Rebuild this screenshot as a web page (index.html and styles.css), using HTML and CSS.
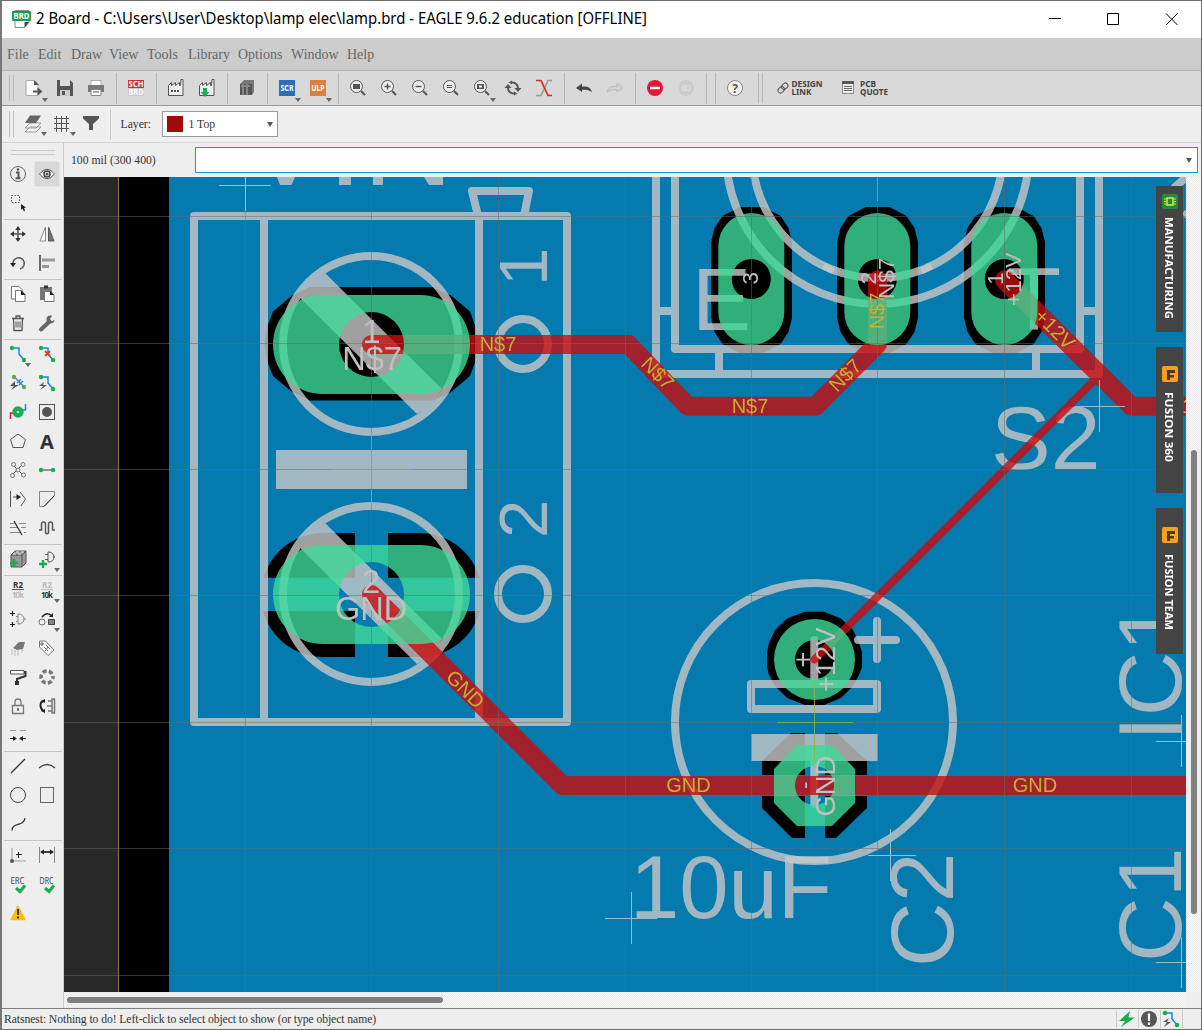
FILE: index.html
```
<!DOCTYPE html>
<html lang="en">
<head>
<meta charset="utf-8">
<title>2 Board - EAGLE</title>
<link rel="stylesheet" href="styles.css">
</head>
<body>
<div class="window">
  <header class="titlebar">
    <svg class="app-icon" viewBox="0 0 20 22"><path d="M3 2.500h14v12l-4.500 5H3z" fill="#fff" stroke="#888"/><path d="M17 14h-4.500v5.500z" fill="#444"/><rect y="3" width="19" height="10" rx="1" fill="#1c9a4e"/><text x="9.500" y="11.300" class="ic-b" font-size="8.500" fill="#fff" textLength="16" lengthAdjust="spacingAndGlyphs">BRD</text></svg>
    <svg class="title-text" width="620" height="30" viewBox="0 0 620 30"><text x="1" y="20" textLength="611" lengthAdjust="spacingAndGlyphs">2 Board - C:\Users\User\Desktop\lamp elec\lamp.brd - EAGLE 9.6.2 education [OFFLINE]</text></svg>
    <svg class="win-buttons" width="136" height="30" viewBox="0 0 136 30" fill="none" stroke="#000"><path d="M0 14.500h12M58.500 9.500h11v11h-11zM117 9.500l11.500 11.500M128.500 9.500l-11.500 11.500"/></svg>
  </header>
  <nav class="menubar"><span>File</span><span>Edit</span><span>Draw</span><span>View</span><span>Tools</span><span>Library</span><span>Options</span><span>Window</span><span>Help</span></nav>

  <div class="toolbar">
    <i class="grip"></i>
    <svg class="tb"><path d="M-8-7.500H0l4 4V7.500H-8z" fill="#fff" stroke="#aaa"/><path d="M0-8l5 5H0z" class="f"/><path d="M-1 3.500H6M3.500 0.500l3.500 3-3.500 3" class="s w2"/><path d="M8 10h6l-3 4z" class="a"/></svg>
    <svg class="tb"><path d="M-8-8H5l3 3V8H-8z" class="f"/><path d="M-5-8H5v6H-5z" fill="#ddd"/><path d="M-5 2H5v6H-5z" fill="#ccc"/><path d="M-3 3h3v4h-3z" class="f"/></svg>
    <svg class="tb"><path d="M-5-7.500H5v5H-5z" fill="#fff" stroke="#aaa"/><path d="M-8-3H8V4H-8z" fill="#777"/><path d="M-5 1.500H5v6H-5z" fill="#fff" stroke="#888"/><path d="M-3 4H3" class="s"/></svg>
    <i class="sep"></i>
    <svg class="tb"><rect x="-8" y="-8" width="16" height="8" fill="#cf2b2b"/><rect x="-8" width="16" height="8" fill="#c9c9c9"/><text y="-1" class="ic-b" font-size="8" fill="#fff" textLength="15" lengthAdjust="spacingAndGlyphs">SCH</text><text y="7" class="ic-b" font-size="8" fill="#fff" textLength="15" lengthAdjust="spacingAndGlyphs">BRD</text></svg>
    <i class="sep"></i>
    <svg class="tb"><path d="M-7.500 7.500v-10l3-3v3l4-3v3l4-3v3h1l.5-6h2V7.500z" fill="#eee" stroke="#555"/><path d="M-5 3h9" stroke="#555" stroke-width="2" stroke-dasharray="2 1"/></svg>
    <svg class="tb"><path d="M-7.500 7.500v-10l3-3v3l4-3v3l4-3v3h1l.5-6h2V7.500z" fill="#eee" stroke="#555"/><path d="M-4 0h4v4h2.500l-4.500 5-4.500-5H-4z" fill="#1ab04c"/></svg>
    <i class="sep"></i>
    <svg class="tb"><path d="M-7-4l4-4H7l-2 4zM7-8V4L5 7V-4z" fill="#777"/><path d="M-7-4H5V7H-7z" fill="#555"/><path d="M-4-4v11M0-4v11M-6-2h1M-3-2h2M1-2h2" stroke="#bbb"/></svg>
    <i class="sep"></i>
    <svg class="tb"><rect x="-8" y="-8" width="16" height="16" fill="#2a70b8"/><text y="3" class="ic-b" font-size="8.500" fill="#fff" textLength="13" lengthAdjust="spacingAndGlyphs">SCR</text><path d="M8 10h6l-3 4z" class="a"/></svg>
    <svg class="tb"><rect x="-8" y="-8" width="16" height="16" fill="#db813c"/><text y="3" class="ic-b" font-size="8.500" fill="#fff" textLength="13" lengthAdjust="spacingAndGlyphs">ULP</text><path d="M8 10h6l-3 4z" class="a"/></svg>
    <i class="sep"></i>
    <svg class="tb"><circle cx="-1.500" cy="-1.500" r="6" class="s"/><path d="M3 3l4 4" class="s w2"/><path d="M-5-4h7v5h-7z" class="f"/></svg>
    <svg class="tb"><circle cx="-1.500" cy="-1.500" r="6" class="s"/><path d="M3 3l4 4" class="s w2"/><path d="M-4.500-1.500h6M-1.500-4.500v6" class="s w15"/></svg>
    <svg class="tb"><circle cx="-1.500" cy="-1.500" r="6" class="s"/><path d="M3 3l4 4" class="s w2"/><path d="M-4.500-1.500h6" class="s w15"/></svg>
    <svg class="tb"><circle cx="-1.500" cy="-1.500" r="6" class="s"/><path d="M3 3l4 4" class="s w2"/><path d="M-4-2.500h5M-4-.5h5" class="s"/></svg>
    <svg class="tb"><circle cx="-1.500" cy="-1.500" r="6" class="s"/><path d="M3 3l4 4" class="s w2"/><path d="M-5-4h7v5h-7z" class="f"/><path d="M-3-2.500h3v2h-3z" fill="#fff"/><path d="M8 10h6l-3 4z" class="a"/></svg>
    <svg class="tb"><path d="M-1-5.500A5.500 5.500 0 0 1 5 0M1 5.500A5.500 5.500 0 0 1-5 0" class="s w2"/><path d="M1.500 0h7L5 4zM-1.500 0h-7L-5-4zM-1-7.500v4l-3.500-2zM1 7.500v-4l3.500 2z" class="f"/></svg>
    <svg class="tb"><path d="M8-7.500H4L-3 7.500h-5" fill="none" stroke="#999" stroke-width="1.500"/><path d="M-8-7.500h5L4 7.500h4" fill="none" stroke="#d8261e" stroke-width="1.700"/></svg>
    <i class="sep"></i>
    <svg class="tb"><path d="M-8 0l6-4.500v3C4-2 7 0 8 4 5 2 2 1.500-2 1.800V4z" fill="#444"/></svg>
    <svg class="tb"><path d="M8 0L2-4.500v3C-4-2-7 0-8 4c3-2 6-2.500 10-2.200V4z" fill="#d4d4d4" stroke="#bbb"/></svg>
    <i class="sep"></i>
    <svg class="tb"><circle r="8" fill="#de1a38"/><path d="M-5 0H5" stroke="#fff" stroke-width="2.500"/></svg>
    <svg class="tb"><circle r="8" fill="#cdcdcd"/><text y="3" class="ic-b" font-size="8" fill="#ddd" textLength="10">GO</text></svg>
    <i class="sep"></i><i class="sep"></i>
    <svg class="tb"><circle r="7.500" fill="#f2f2f2" stroke="#888"/><text y="4.500" class="ic-b" font-size="12" fill="#555">?</text></svg>
    <i class="grip2"></i>
    <svg class="wide" width="50" height="20" viewBox="0 0 50 20"><g class="s" transform="rotate(-45 6 10)"><rect x="0" y="7.500" width="7" height="5" rx="2.500"/><rect x="5" y="7.500" width="7" height="5" rx="2.500"/></g><text x="14.500" y="9" textLength="31" lengthAdjust="spacingAndGlyphs">DESIGN</text><text x="14.500" y="16.500" textLength="20" lengthAdjust="spacingAndGlyphs">LINK</text></svg>
    <svg class="wide" width="50" height="20" viewBox="0 0 50 20"><path d="M.5 3.500h11v12H.5z" fill="#eee" stroke="#888"/><path d="M0 3h12v3H0z" class="f"/><path d="M2 8.500h8M2 10.500h8M2 12.500h8" stroke="#666"/><text x="18" y="9" textLength="16" lengthAdjust="spacingAndGlyphs">PCB</text><text x="18" y="16.500" textLength="28" lengthAdjust="spacingAndGlyphs">QUOTE</text></svg>
  </div>

  <div class="toolbar params">
    <i class="grip"></i>
    <svg class="pb"><path d="M-8 6l5-5H8L3 6zM-8 2l5-5H8L3 2z" transform="translate(0 2)" fill="#f6f6f6" stroke="#999"/><path d="M-8-1l5-7.500H8L3-1z" fill="#666"/><path d="M8 8h6l-3 4z" class="a"/></svg>
    <svg class="pb"><path d="M-8-5.500H7M-8-.5H7M-8 4.500H7M-5.500-8V8M-.5-8V8M4.500-8V8" class="s"/><path d="M8 8h6l-3 4z" class="a"/></svg>
    <svg class="pb"><path d="M-8-8H8v2.500L2 0v6h-4V0l-6-5.500z" class="f"/></svg>
    <i class="psep"></i>
    <span class="layer-label">Layer:</span>
    <div class="combo"><b></b><span>1 Top</span><em></em></div>
  </div>

  <main class="workspace">
    <aside class="tools">
      <svg class="t"><circle r="7.500" fill="none" stroke="#666"/><path d="M-2-1.500H.5V4M-2.500 4.200h5" class="s w2"/><circle cx="0" cy="-4.500" r="1.300" class="f"/></svg>
      <svg class="t"><rect x="-12.500" y="-12.500" width="25" height="25" rx="1.500" fill="#d8d8d8"/><path d="M-7.500 0Q0-9.500 7.500 0Q0 9.500-7.500 0z" fill="#fff" stroke="#555"/><circle r="3" fill="#eee" stroke="#444" stroke-width="1.500"/><circle r="1.500" class="f"/></svg>
      <svg class="t"><path d="M-6.500-7.500h8v7h-8z" fill="none" stroke="#555" stroke-dasharray="1.500 1.500"/><path d="M3 1v6l1.500-1.500L6 8.500l1-1L6 5l2-.5z" fill="#222"/></svg>
      <span></span>
      <hr>
      <svg class="t"><path d="M-5 0H5M0-5V5" class="s w15"/><path d="M-8 0l4-2.700v5.400zM8 0L4-2.700v5.400zM0-8l-2.700 4h5.400zM0 8l-2.700-4h5.400z" fill="#333"/></svg>
      <svg class="t"><path d="M-1.500-7V7h-5.500z" fill="#fff" stroke="#888"/><path d="M1.500-7V7H7z" fill="#777" stroke="#555"/></svg>
      <svg class="t"><path d="M-5 1.500A5.700 5.700 0 1 1 2 6" class="s w15"/><path d="M-8 0h6l-3 4z" fill="#222"/></svg>
      <svg class="t"><path d="M-7-8V8" stroke="#222" stroke-width="1.300"/><path d="M-5-4.500H8v3H-5zM-5 2H2v3h-7z" fill="#999"/></svg>
      <hr>
      <svg class="t"><path d="M-6.500-7.500H1l3 3V5h-10.500z" fill="#fff" stroke="#777"/><path d="M-2.500-3.500H3l4 4v7h-9.500z" fill="#fff" stroke="#777"/><path d="M3-4l4.500 5H3z" fill="#222"/></svg>
      <svg class="t"><path d="M-7-7H5V6H-7z" fill="#777"/><path d="M-3-8.500h4v3h-4z" fill="#333"/><path d="M-2.500-2.500H3l4 4v6h-9.500z" fill="#fff" stroke="#777"/><path d="M3-3l4.500 4H3z" fill="#222"/></svg>
      <svg class="t"><path d="M-6-4.500H6M-4.500-4.500l.5 12h8l.5-12M-2-5v-2h4v2" fill="none" stroke="#555" stroke-width="1.300"/><path d="M-2-1.500v6M0-1.500v6M2-1.500v6" class="s"/></svg>
      <svg class="t"><path d="M-6 6.500L2-1" stroke="#666" stroke-width="4" stroke-linecap="round"/><circle cx="3.500" cy="-3.500" r="4" fill="#666"/><path d="M3-4l3-4.500 3 4-4 3z" fill="#eee"/></svg>
      <hr>
      <svg class="t"><path d="M-6-6H1V0L6 6" class="bl"/><g class="g"><circle cx="-6" cy="-6" r="2.200"/><circle cx="6" cy="6" r="2.200"/></g><path d="M7 9h6l-3 4z" class="a"/></svg>
      <svg class="t"><path d="M-6-6H1V0L6 6" class="bl"/><g class="g"><circle cx="-6" cy="-6" r="2.200"/><circle cx="6" cy="6" r="2.200"/></g><path d="M-2-3l5 5M3-3l-5 5" stroke="#e33" stroke-width="1.800"/></svg>
      <svg class="t"><path d="M-3-5.500L6 4" stroke="#1987d8" stroke-width="1.200"/><path d="M-1 0l4-4M1 2l4-4" stroke="#1987d8" stroke-width="1.300"/><g fill="#6da355"><circle cx="-4" cy="-6" r="2.200"/><circle cx="6" cy="4" r="2.200"/></g><path d="M-3-2l-5 5h4l-3 4 8-5h-4z" fill="#555"/></svg>
      <svg class="t"><path d="M-6-6H1V0L6 6" class="bl"/><g class="g"><circle cx="-6" cy="-6" r="2.200"/><circle cx="6" cy="6" r="2.200"/></g><path d="M-3-1l-5 4h4l-3 4 7-5h-4z" fill="#555"/></svg>
      <svg class="t"><path d="M-7.500 7V1h5" fill="none" stroke="#c22" stroke-width="1.500"/><path d="M7.500-8v6h-5" class="bl"/><circle r="5.700" fill="#14ae50"/><circle r="1.200" fill="#eee"/></svg>
      <svg class="t"><rect x="-7.500" y="-7.500" width="15" height="15" fill="none" stroke="#555"/><circle r="5" class="f"/></svg>
      <svg class="t"><path d="M0-7L7.500-1.500 5 6.500H-5L-7.500-1.500z" fill="none" stroke="#555"/></svg>
      <svg class="t"><text y="7.500" class="ic-b" font-size="20" fill="#333">A</text></svg>
      <svg class="t"><path d="M-5-5L4 4M4-5l-9 9" class="s"/><g fill="#eee" stroke="#777"><circle cx="-4.500" cy="-5.500" r="2"/><circle cx="5" cy="-5.500" r="2"/><circle cx="-5.500" cy="5.500" r="2"/><circle cx="5.500" cy="5" r="2"/><circle r="2"/></g></svg>
      <svg class="t"><path d="M-6 0H6" stroke="#777" stroke-width="1.500"/><g class="g"><circle cx="-6" r="2.200"/><circle cx="6" r="2.200"/></g></svg>
      <svg class="t"><path d="M-7.500-8V8M2-7l5.500 7L3 7M-5-2H0" class="s"/><path d="M-1.500-5L3-2l-4.500 3z" fill="#222"/></svg>
      <svg class="t"><path d="M-7.500-7.500h15v4L-3 7.500h-4.500z" fill="none" stroke="#888"/><path d="M7.500-3.500L-3 7.500" stroke="#222"/></svg>
      <svg class="t"><path d="M-8-4.500H-3M1-4.500H8M-8-.5H-1M3-.5H8M-8 4.500H2M6 4.500H8" stroke="#888"/><path d="M-4-7L4 7" stroke="#333" stroke-width="1.300"/></svg>
      <svg class="t"><path d="M-8 2h2.500V-4a2 2 0 0 1 4 0V5a2 2 0 0 0 3 0V-4a2 2 0 0 1 4 0v6H8" class="s w15"/></svg>
      <hr>
      <svg class="t"><path d="M-7-4l4-4H8v12L4 8h-11z" fill="#999" stroke="#555"/><path d="M-7-4H4V8M4-4l4-4" class="s"/><path d="M-5-5h3M0-5h3M-2-7h3M3-7h3" stroke="#eee"/><path d="M-8 4h8M-4 0v8" stroke="#14ae50" stroke-width="2.500"/></svg>
      <svg class="t"><path d="M-2-4.500H1M-2 .5H1M8-2H6M1-7h1a5 5 0 0 1 0 10H1z" class="s"/><path d="M-8 5h8M-4 1v8" stroke="#14ae50" stroke-width="2.300"/><path d="M7 9h6l-3 4z" class="a"/></svg>
      <hr>
      <svg class="t"><text y="-2" class="ic-b" font-size="8" fill="#333" textLength="10">R2</text><path d="M-6-.5H6" class="s"/><text y="7.500" class="ic-b" font-size="8" fill="#bbb" textLength="12">10k</text></svg>
      <svg class="t"><text y="-2" class="ic-b" font-size="8" fill="#bbb" textLength="10">R2</text><path d="M-6-.5H6" stroke="#bbb"/><text y="7.500" class="ic-b" font-size="8" fill="#333" textLength="12">10k</text><path d="M7 9h6l-3 4z" class="a"/></svg>
      <svg class="t"><path d="M-8-5.500h5M-5.500-8v5M-8 5.500h5M-5.500 3v5" stroke="#222" stroke-width="1.200"/><path d="M-2-2.500H0M-2 2.500H0M8 0H6M0-5h1a5 5 0 0 1 0 10H0z" fill="none" stroke="#888"/></svg>
      <svg class="t"><path d="M-5-2Q0-8 5-3" fill="none" stroke="#222" stroke-width="1.700"/><path d="M6-6v4H2z" fill="#222"/><circle cx="-5" cy="3" r="3" fill="none" stroke="#777"/><path d="M1.500.5h6v5h-6z" fill="#888" stroke="#444"/><path d="M7 9h6l-3 4z" class="a"/></svg>
      <svg class="t"><path d="M-5 0L1-6H7L5 1-1 2z" fill="#777"/><path d="M-6 1v6M-3 2v6M0 2v6M4 1v4" stroke="#ccc" stroke-width="1.500"/></svg>
      <svg class="t"><path d="M-7.500-7h6L7 2 1 7.500-7.500-1z" fill="#f7f7f7" stroke="#777"/><circle cx="-5" cy="-4" r="1.200" class="s"/><path d="M-1-3l4 4M-3-1l4 4M-2 3l3-4" stroke="#777"/></svg>
      <svg class="t"><path d="M-7.500-6.500H6v3.500H-7.500z" fill="#fff" stroke="#555"/><path d="M6-5h1.500v4L-1 2v6" fill="none" stroke="#333" stroke-width="2"/><path d="M-3 4h4v4h-4z" fill="#333"/></svg>
      <svg class="t"><circle r="6" fill="none" stroke="#777" stroke-width="3.500" stroke-dasharray="4 2.280" stroke-dashoffset="2"/></svg>
      <svg class="t"><path d="M-5.500-.5h11v8h-11zM-3-.5V-4a3 3 0 0 1 6 0v3.500" fill="#eee" stroke="#777" stroke-width="1.300"/><path d="M0 2v3" class="s w15"/></svg>
      <svg class="t"><path d="M-3-5C-7-5-8 1-4 5" fill="none" stroke="#222" stroke-width="1.800"/><path d="M-2-7v4l-4-2zM-2 7V3l-4 2z" fill="#222"/><path d="M5-7h2.500V7H5zM1-5h4M0 0h5M1 5h4" fill="none" stroke="#777" stroke-width="1.500"/></svg>
      <svg class="t"><path d="M-8-4.500h6M2-4.500h6" stroke="#999"/><path d="M-8 3.500h5M8 3.500H3" stroke="#222"/><path d="M-5 1l4 2.500L-5 6zM5 1L1 3.500 5 6z" fill="#222"/></svg>
      <span></span>
      <hr>
      <svg class="t"><path d="M-7 7L7-7" stroke="#333" stroke-width="1.300"/></svg>
      <svg class="t"><path d="M-8 2Q0-5 8 2" stroke="#444" stroke-width="1.300" fill="none"/></svg>
      <svg class="t"><circle r="7.500" fill="none" stroke="#444"/></svg>
      <svg class="t"><rect x="-6.500" y="-7.500" width="13" height="15" fill="none" stroke="#666"/></svg>
      <svg class="t"><path d="M-6 6.500C-6-2 6 3 7-6" fill="none" stroke="#333" stroke-width="1.300"/></svg>
      <span></span>
      <hr>
      <svg class="t"><path d="M-6-7V6H8" fill="none" stroke="#bbb" stroke-width="1.700"/><circle cx="-6" cy="6" r="2" class="f"/><path d="M-2-.5h6M.5-3v6" stroke="#222"/></svg>
      <svg class="t"><path d="M-7.500-8V8M7.500-8V8" stroke="#888"/><path d="M-5-3H5" stroke="#222" stroke-width="1.700"/><path d="M-7-3l4-2.500v5zM7-3L3-5.500v5z" fill="#222"/></svg>
      <svg class="t"><text y="-.5" class="ic-b thin" font-size="9" fill="#444" x="-.5" textLength="14" lengthAdjust="spacingAndGlyphs">ERC</text><path d="M-2 4l4 3.500 5-6" fill="none" stroke="#14ae50" stroke-width="3"/></svg>
      <svg class="t"><text y="-.5" class="ic-b thin" font-size="9" fill="#444" x="-.5" textLength="14" lengthAdjust="spacingAndGlyphs">DRC</text><path d="M-2 4l4 3.500 5-6" fill="none" stroke="#14ae50" stroke-width="3"/></svg>
      <svg class="t"><path d="M0-6.500L7 6.500H-7z" fill="#fdbc0a" stroke="#fdbc0a" stroke-width="1.500" stroke-linejoin="round"/><path d="M0-4v6M0 3.500v2" stroke="#333" stroke-width="2"/></svg>
    </aside>

    <section class="editor">
      <div class="command"><span>100 mil (300 400)</span><div class="cmd-input"><em></em></div></div>
      <div class="canvas-row">
        <div class="canvas">
          <svg class="board" viewBox="64 177 1122 815">
            <defs>
              <path id="slot" d="M-12-73L12-73 29-64 37-52 40.500-38V38L37 52 29 64 12 73H-12L-29 64-37 52-40.500 38V-38L-37-52-29-64z"/>
              <path id="oval" fill-rule="evenodd" d="M-33-33a33 33 0 0 1 66 0V33a33 33 0 0 1-66 0zM-19.500 0a19.500 20 0 0 0 39 0a19.500 20 0 0 0-39 0z"/>
              <path id="longpad" fill-rule="evenodd" d="M-49-49.500H49a49.500 49.500 0 0 1 0 99H-49a49.500 49.500 0 0 1 0-99zM-32.500 0a32.500 32.500 0 0 0 65 0a32.500 32.500 0 0 0-65 0z"/>
            </defs>
            <rect x="64" y="177" width="55" height="815" fill="#282828"/>
            <rect x="119" y="177" width="50" height="815" fill="#000"/>
            <rect x="118" y="177" width="1" height="815" fill="#947b35"/>
            <rect x="169" y="177" width="1017" height="815" fill="#057aae"/>

            <g class="clearance">
              <path d="M310 287H433L451 295.500 470 311.500 475.500 327 477.500 344 475.500 361 470 376 451 392 434 400.500H310L292 392 273 376 267 361 264.500 344 267 327 273 311.500 292 295.500z"/>
              <use href="#slot" x="751.500" y="280"/><use href="#slot" x="877.500" y="280"/><use href="#slot" x="1004.500" y="280"/>
              <rect x="261" y="533" width="221" height="124" rx="62"/>
              <path d="M805 611.700H824L841 618.500 853 630 859 643 862 652V667L859 675 853 686 841 698 824 705H805L787 698 775 686 769 675 767 667V652L769 643 775 630 787 618.500z"/>
              <path d="M791 733H837L867 761V808L836 838H792L762 808V761z"/>
            </g>
            <path fill="#057aae" d="M355 532h33v126h-33zM260 577.700h224V611H260zM805 732h20v107h-20zM761 775h107v21H761z"/>

            <g class="silk" opacity=".8">
              <g class="sl">
                <rect x="194" y="216" width="373" height="506"/>
                <path d="M264 216V722M479 216V722M478 216L472 191H529L524 216"/>
                <circle cx="371" cy="344" r="88"/><circle cx="371" cy="594" r="88"/>
                <circle cx="523" cy="344" r="25"/><circle cx="523" cy="594" r="25"/>
                <path d="M656 170V374H1099V170M675 170V349H1080V170M656 311h19M1080 311h19M719 349v25M1036 349v25"/>
                <circle cx="877.500" cy="152.500" r="125.500"/><circle cx="877.500" cy="152.500" r="151.500"/>
                <circle cx="814" cy="722" r="139"/>
                <path d="M877 621v38M858 640h38M814.300 640V684M814.300 760V804"/>
                <rect x="751" y="684" width="126" height="25"/>
                <path d="M1175 187L1190 174M1187 214h9"/>
              </g>
              <path d="M325 273L442 389 432 405 417 414 300 298 310 283z"/>
              <path d="M325 523L442 639 432 655 417 664 300 548 310 533z"/>
              <path d="M276 450H467V489H276zM751 734H878V761H751z"/>
              <path d="M277 177H295L291.500 185H280zM339 177H351V185H339zM373 177h10v8h-10zM424 177H443V185H429z"/>
            </g>
            <g class="silk ar" opacity=".8" font-size="89.500">
              <text x="991" y="469">S2</text><text x="692" y="330" font-size="88.500">E</text><text x="1007" y="330" font-size="88.500">T</text>
              <text x="630" y="918" textLength="202" lengthAdjust="spacingAndGlyphs">10uF</text>
              <text transform="translate(953 967) rotate(-90)">C2</text>
              <text transform="translate(1181 962) rotate(-90)">C1</text>
              <text transform="translate(1181 741) rotate(-90)">IC1</text>
              <text transform="translate(547 286) rotate(-90)" font-size="69">1</text>
              <text transform="translate(547 538) rotate(-90)" font-size="69">2</text>
              <path d="M825 263l10 5-3 6-10-5zM930 263l-10 5 3 6 10-5z"/>
            </g>
            <g class="copper" opacity=".8">
              <path d="M371.500 344.500H628.500L688 406.300H815.500L877.500 344V280M371.500 594.500L562.500 785.500H1196M1004.500 280L1131.500 406.300H1196"/>
              <path class="thin-trace" d="M1096 378.500L814.500 659.500"/>
            </g>
            <g class="pads" opacity=".8">
              <use href="#longpad" x="371.500" y="344.500"/><use href="#longpad" x="371.500" y="594.500"/>
              <use href="#oval" x="751.300" y="279"/><use href="#oval" x="877.300" y="279"/><use href="#oval" x="1004.300" y="279"/>
              <path fill-rule="evenodd" d="M774 659.500a40.500 40.500 0 0 0 81 0a40.500 40.500 0 0 0-81 0zM795 659.500a19.500 19.500 0 0 0 39 0a19.500 19.500 0 0 0-39 0z"/>
              <path fill-rule="evenodd" d="M797 745H832L855 769V803L832 826H797L774 803V769zM795 785.500a19.500 19.500 0 0 0 39 0a19.500 19.500 0 0 0-39 0z"/>
            </g>
            <path class="grid" d="M245.500 177V992M371.500 177V992M498.500 177V992M625.500 177V992M751.500 177V992M877.500 177V992M1004.500 177V992M1131.500 177V992M64 216.500H1186M64 343.500H1186M64 469.500H1186M64 595.500H1186M64 722.500H1186M64 848.500H1186M64 975.500H1186"/>
            <path class="origin" d="M371.500 432V508M333 469.500H410M814.500 684V761M777 722.500H853M877.500 177V201"/>
            <path class="mark" d="M219 185.500H271M245.500 177V211M1075 406.500H1125M1099.500 380V432M1156 741.500H1186M1181.500 715V767M868 855.500H916M890.500 829V881M605 918.500H657M631.500 892V944M1156 962.500H1186M1181.500 937V988"/>

            <g class="ar pin" font-size="32.500">
              <text x="371.500" y="343" class="m">1</text><text x="372" y="370" class="m">N$7</text>
              <text x="371" y="593" class="m">2</text><text x="371" y="620" class="m">GND</text>
              <g font-size="22.500">
                <text transform="translate(758 284.500) rotate(-90)">3</text>
                <text transform="translate(876 284.500) rotate(-90)">2</text>
                <text transform="translate(1003 285) rotate(-90)">1</text>
                <text transform="translate(894 299) rotate(-90)">N$7</text>
                <text transform="translate(1021 306) rotate(-90)">+12V</text>
                <text transform="translate(812 667.500) rotate(-90)" font-size="27">+</text>
                <text transform="translate(812 789) rotate(-90)">-</text>
              </g>
              <g font-size="27.300">
                <text transform="translate(834.500 692) rotate(-90)">+12V</text>
                <text transform="translate(834.500 816.500) rotate(-90)">GND</text>
              </g>
            </g>
            <g class="ar net m" font-size="20">
              <text x="498" y="351">N$7</text><text x="750" y="413">N$7</text><text x="688.500" y="792">GND</text><text x="1035" y="792">GND</text>
              <text transform="translate(653 378) rotate(45)">N$7</text>
              <text transform="translate(850 380) rotate(-45)">N$7</text>
              <text transform="translate(884 311) rotate(-90)">N$7</text>
              <text transform="translate(1050 334) rotate(45)">+12V</text>
              <text transform="translate(460.500 694) rotate(45)">GND</text>
              <text x="1194" y="413">+12V</text>
            </g>
          </svg>
          <div class="tab manufacturing"><svg width="27" height="146" viewBox="0 0 27 146"><rect x="6" y="8" width="16" height="15" rx="2" fill="#1c8d44"/><rect x="11" y="12" width="6" height="7" fill="#1c8d44" stroke="#e8e337" stroke-width="1.500"/><path d="M8 13h2M8 15.500h2M8 18h2M18 13h2M18 15.500h2M18 18h2" stroke="#e8e337"/><text transform="translate(9 31) rotate(90)" textLength="102" lengthAdjust="spacingAndGlyphs">MANUFACTURING</text></svg></div>
          <div class="tab fusion360"><svg width="27" height="146" viewBox="0 0 27 146"><rect x="6" y="19" width="16" height="16" rx="2" fill="#f6a021"/><path d="M11 23h8v3h-5v2h4v2.500h-4V33h-3z" fill="#4a3a20"/><text transform="translate(9 45) rotate(90)" textLength="70" lengthAdjust="spacingAndGlyphs">FUSION 360</text></svg></div>
          <div class="tab fusionteam"><svg width="27" height="146" viewBox="0 0 27 146"><rect x="6" y="19" width="16" height="16" rx="2" fill="#f6a021"/><path d="M11 23h8v3h-5v2h4v2.500h-4V33h-3z" fill="#4a3a20"/><text transform="translate(9 46) rotate(90)" textLength="76" lengthAdjust="spacingAndGlyphs">FUSION TEAM</text></svg></div>
        </div>
        <div class="vscroll"><i></i></div>
      </div>
      <div class="hscroll"><i></i><b></b></div>
    </section>
  </main>

  <footer class="status">
    <span>Ratsnest: Nothing to do! Left-click to select object to show (or type object name)</span>
    <div class="indicators">
      <svg class="st"><path d="M3-8L-8 2h6l-4 6L8-1.500H1.500z" fill="#14b04e"/></svg>
      <svg class="st"><circle r="8" fill="#555"/><path d="M0-5.500V2M0 3.500V6" stroke="#fff" stroke-width="2.200"/></svg>
      <svg class="st"><path d="M-6-6H1V0L6 6" class="bl"/><g class="g"><circle cx="-6" cy="-6" r="2.300"/><circle cx="6" cy="6" r="2.300"/></g><path d="M-2-1l-6 4h4l-3 5 7-5h-4z" fill="#555"/></svg>
    </div>
  </footer>
</div>
</body>
</html>
```
FILE: styles.css
```
* { box-sizing: border-box; }
body { margin: 0; font-family: "Liberation Serif", serif; font-size: 11.700px; color: #333; }
.window { width: 1202px; height: 1030px; display: flex; flex-direction: column; background: #eee; border: 1px solid #6e6e6e; border-left: 2px solid #777; overflow: hidden; }

.titlebar { height: 37px; flex: none; background: #fff; display: flex; align-items: flex-start; }
.app-icon { width: 20px; height: 22px; margin: 7px 4px 0 10px; }
.title-text { margin: 3px 0 0 -1px; font: 16px "Noto Sans", sans-serif; }
.win-buttons { margin: 3px 16px 0 auto; }

.menubar { height: 32px; flex: none; background: #ccc; display: grid; grid-template-columns: 31px 33px 38px 38px 41px 50px 53px 56px 40px; align-items: center; padding: 2px 0 0 5px; font-size: 14px; color: #666; }

.toolbar { height: 36px; flex: none; background: #d9d9d9; border-top: 1px solid #b5b5b5; border-bottom: 1px solid #999; display: flex; align-items: center; }
.params { height: 37px; background: #eee; border-top: 0; border-bottom-color: #d5d5d5; }
.grip { width: 5px; height: 26px; margin: 0 4.500px 0 7px; border: solid #bbb; border-width: 0 1px; flex: none; }
.sep { width: 9px; height: 31px; flex: none; background: linear-gradient(#b5b5b5, #b5b5b5) 4px 0 / 1px 100% no-repeat; }
.grip2 { width: 5px; height: 30px; margin-left: 7px; border: solid #b8b8b8; border-width: 0 1px; flex: none; }
.psep { width: 1px; height: 31px; background: #ccc; margin-left: 4px; }
svg { display: block; overflow: hidden; flex: none; }

/* Icons are drawn around their own origin, which sits in the middle of the cell. */
.tb, .pb, .t, .st { overflow: visible; width: 1px; height: 1px; }
.tb { margin: 0 14.500px 0 15.500px; }
.pb { margin: 0 13.500px 0 14.500px; }
.t { margin: 14.500px 13.500px 13.500px 14.500px; }
.st { margin: 0 10px 0 11px; }
.wide { font: bold 8px "Noto Sans", sans-serif; fill: #444; margin-left: 14.500px; }
.layer-label { margin: 1px 0 0 10px; width: 41px; }
.combo { width: 116px; height: 26px; border: 1px solid #999; background: #fff; display: flex; align-items: center; padding: 0 4px; }
.combo span { padding-top: 1px; }
.combo b { width: 16px; height: 16px; background: #a00a0a; margin-right: 6px; }
.combo em, .cmd-input em { margin-left: auto; border: 3px solid transparent; border-top: 5px solid #555; border-bottom: 0; }

.s { stroke: #555; fill: none; }
circle.s { fill: #eee; }
.w15 { stroke-width: 1.500; }
.w2 { stroke-width: 2; }
.f { fill: #555; }
.a { fill: #666; }
.bl { fill: none; stroke: #1987d8; stroke-width: 1.500; }
.g { fill: #14b04e; }
.ic-b { font-family: "Noto Sans", sans-serif; font-weight: bold; text-anchor: middle; }
.thin { font-weight: normal; }

.workspace { flex: 1; min-height: 0; display: flex; }
.tools { width: 62px; flex: none; padding: 16.500px 0 0 1.500px; border-right: 1px solid #ccc; display: grid; grid-template-columns: 29px 29px; grid-auto-rows: auto; align-content: start; background: linear-gradient(#ccc, #ccc) 9px 7px / 44px 1px no-repeat, linear-gradient(#ccc, #ccc) 9px 11px / 44px 1px no-repeat, #eee; }
.tools span { height: 29px; }
.tools hr { grid-column: 1 / 3; border: 0; height: 1px; width: 58px; margin: 1px 0 0; background: #c6c6c6; }
.editor { flex: 1; min-width: 0; display: flex; flex-direction: column; }
.command { height: 34px; flex: none; display: flex; align-items: center; }
.command > span { width: 131px; padding-left: 7px; }
.cmd-input { width: 1003px; height: 26px; border: 1px solid #1a94d4; background: #fff; display: flex; align-items: center; padding-right: 5px; }
.canvas-row { display: flex; height: 815px; flex: none; }
.canvas { position: relative; width: 1122px; height: 815px; flex: none; }
.board { width: 1122px; height: 815px; }

.silk { fill: #c9c8c8; }
.sl { fill: none; stroke: #c9c8c8; stroke-width: 8; stroke-linejoin: round; stroke-linecap: round; }
.copper { fill: none; stroke: #c80c0c; stroke-width: 19; stroke-linejoin: round; stroke-linecap: round; }
.thin-trace { stroke-width: 8; }
.pads { fill: #3edb99; }
.grid { fill: none; stroke: rgba(105, 105, 105, .5); }
.origin { fill: none; stroke: rgba(155, 175, 60, .8); }
.mark { fill: none; stroke: #9dbccb; }
.ar { font-family: "Liberation Sans", Arial, sans-serif; }
.pin { fill: #c0c0c0; }
.net { fill: #c3b033; }
.m { text-anchor: middle; }

.tab { position: absolute; left: 1092px; width: 27px; height: 146px; background: #444; font: bold 11px "Noto Sans", sans-serif; fill: #fff; }
.manufacturing { top: 9px; }
.fusion360 { top: 170px; }
.fusionteam { top: 331px; }

.vscroll, .hscroll { background: repeating-conic-gradient(#e9e9e9 0 25%, #fbfbfb 0 50%) 0 0 / 2px 2px; }
.vscroll { flex: 1; padding-top: 273px; }
.vscroll i { display: block; width: 15px; height: 464px; background: #eee; padding-left: 5px; }
.vscroll i::before { content: ""; display: block; width: 6px; height: 464px; border-radius: 3px; background: #808080; }
.hscroll { flex: 1; display: flex; align-items: center; padding-left: 3px; }
.hscroll i { width: 376px; height: 6px; border-radius: 3px; background: #808080; box-shadow: 0 -5px #eee, 0 5px #eee; }
.hscroll b { margin-left: auto; width: 15px; height: 16px; background: #eee; }

.status { height: 21px; flex: none; border-top: 1px solid #7f7f7f; display: flex; align-items: center; padding-left: 2px; }
.status > span { letter-spacing: -.09px; }
.indicators { margin-left: auto; margin-right: 18px; height: 18px; display: flex; align-items: center; border-right: 1px solid #ccc; background: linear-gradient(#ccc, #ccc) 0 0 / 1px 100% no-repeat, linear-gradient(#ccc, #ccc) 22px 0 / 1px 100% no-repeat, linear-gradient(#ccc, #ccc) 44px 0 / 1px 100% no-repeat; }
```
